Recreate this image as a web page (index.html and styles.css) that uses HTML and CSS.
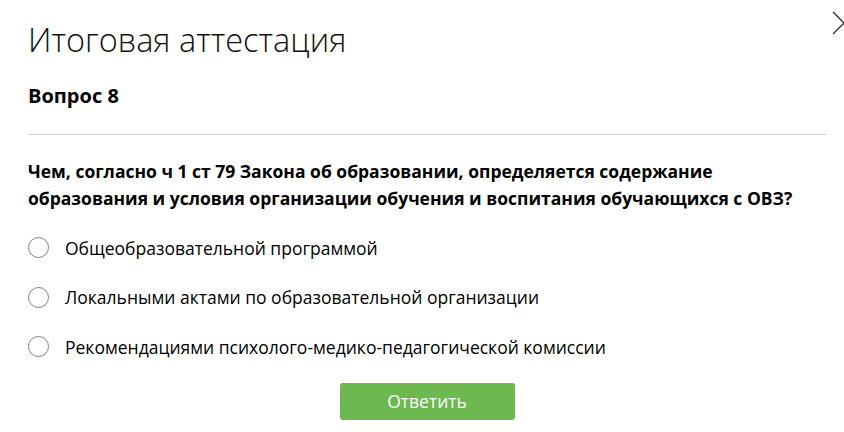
FILE: index.html
```html
<!DOCTYPE html>
<html lang="ru">
<head>
<meta charset="utf-8">
<title>Итоговая аттестация</title>
<link rel="stylesheet" href="styles.css">
</head>
<body>
<div class="modal">
  <button class="close" aria-label="Закрыть">
    <svg width="24" height="24" viewBox="0 0 24 24"><path d="M1 1 L23 23 M23 1 L1 23" stroke="#333" stroke-width="1.4" fill="none"/></svg>
  </button>
  <h1 class="title">Итоговая аттестация</h1>
  <h2 class="qnum">Вопрос 8</h2>
  <hr class="divider">
  <p class="question">Чем, согласно ч 1 ст 79 Закона об образовании, определяется содержание образования и условия организации обучения и воспитания обучающихся с ОВЗ?</p>
  <ul class="options">
    <li class="option"><span class="radio"></span><span>Общеобразовательной программой</span></li>
    <li class="option"><span class="radio"></span><span>Локальными актами по образовательной организации</span></li>
    <li class="option"><span class="radio"></span><span>Рекомендациями психолого-медико-педагогической комиссии</span></li>
  </ul>
  <div class="actions"><button class="submit">Ответить</button></div>
</div>
</body>
</html>
```
FILE: styles.css
```css
html, body {
  margin: 0;
  padding: 0;
  background: #fff;
  overflow: hidden;
}
body {
  font-family: "Open Sans", "Noto Sans", sans-serif;
  color: #000;
}
.modal {
  position: relative;
  width: 844px;
  height: 432px;
  padding: 0 18px 0 28px;
  box-sizing: border-box;
}
.close {
  position: absolute;
  top: 11px;
  right: -12px;
  padding: 0;
  border: 0;
  background: none;
  width: 24px;
  height: 24px;
}
.close svg { display: block; }
.title {
  margin: 0;
  padding-top: 18px;
  font-size: 32.5px;
  font-weight: 300;
  line-height: 44px;
  color: #111;
}
.qnum {
  margin: 20px 0 0;
  font-size: 20px;
  font-weight: 700;
  line-height: 28px;
}
.divider {
  margin: 24px 0 0;
  border: 0;
  height: 1px;
  background: #d0d0d0;
}
.question {
  max-width: 790px;
  margin: 23px 0 0;
  font-size: 17.5px;
  font-weight: 700;
  line-height: 27px;
}
.options {
  list-style: none;
  margin: 11px 0 0;
  padding: 0;
}
.option {
  display: flex;
  align-items: center;
  gap: 16px;
  height: 49.5px;
  font-size: 17.5px;
  line-height: 24px;
}
.radio {
  width: 19px;
  height: 19px;
  border: 1px solid #808080;
  border-radius: 50%;
  flex: none;
}
.actions {
  display: flex;
  justify-content: center;
  margin-top: 11px;
}
.submit {
  width: 175px;
  height: 37px;
  border: 0;
  border-radius: 3px;
  background: #6db84f;
  color: #fff;
  font-family: "Open Sans", "Noto Sans", sans-serif;
  font-size: 17.5px;
}
```
